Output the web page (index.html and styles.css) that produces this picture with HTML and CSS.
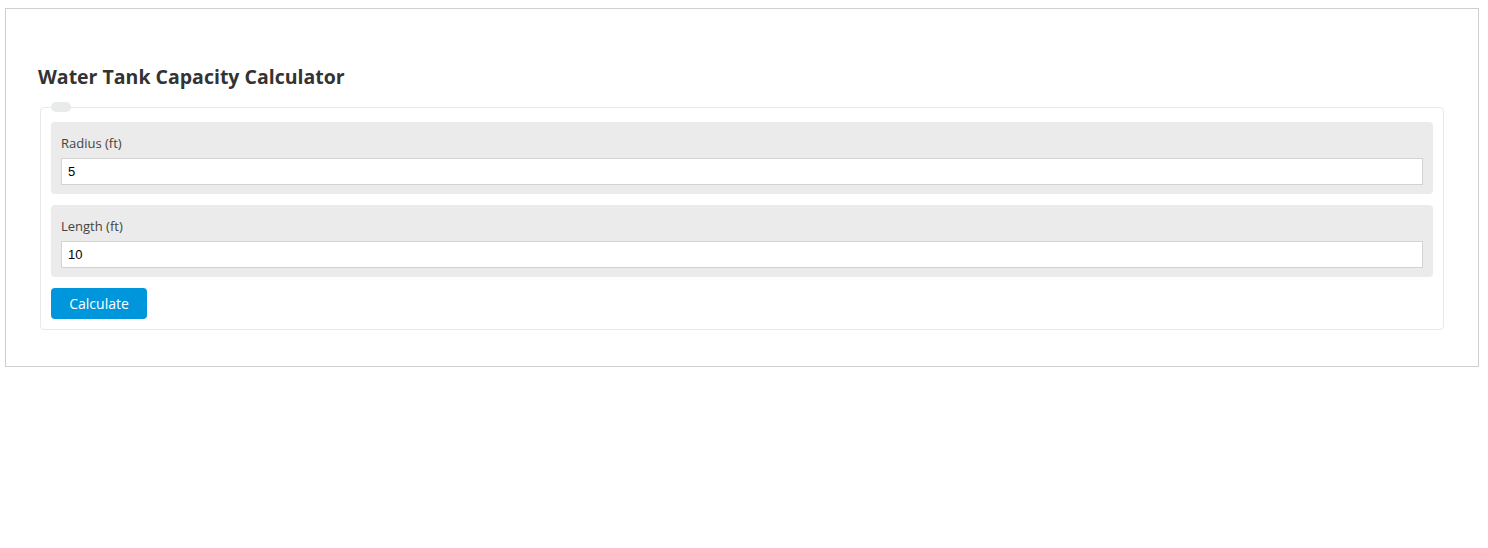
FILE: index.html
```html
<!DOCTYPE html>
<html lang="en">
<head>
    <meta charset="UTF-8">
    <meta name="viewport" content="width=device-width, initial-scale=1.0">
    <title>Water Tank Capacity Calculator</title>
    <link rel="stylesheet" href="styles.css">
</head>
<body>
    <div class="wrapper">
        <h2 class="title">Water Tank Capacity Calculator</h2>

        <fieldset class="calc">
            <legend></legend>

            <div class="field">
                <label for="radius">Radius (ft)</label>
                <input type="text" id="radius" value="5">
            </div>

            <div class="field">
                <label for="length">Length (ft)</label>
                <input type="text" id="length" value="10">
            </div>

            <button class="calc-btn" onclick="calculate()">Calculate</button>
        </fieldset>
    </div>

    <script>
        // volume of a cylindrical tank, in gallons
        function calculate() {
            const r = parseFloat(document.getElementById("radius").value);
            const l = parseFloat(document.getElementById("length").value);
            if (isNaN(r) || isNaN(l)) return;
            const gallons = Math.PI * r * r * l * 7.48052;
            console.log(gallons.toFixed(2));
        }
    </script>
</body>
</html>
```

FILE: styles.css
```css
body {
    margin: 0;
    padding: 8px 9px 0 5px;
    font-family: "Open Sans", "Noto Sans", Arial, sans-serif;
    color: #333;
}
.wrapper {
    border: 1px solid #cfcfcf;
    padding: 55px 34px 36px 34px;
}
.title {
    margin: 0 0 12px -2px;
    font-size: 19.5px;
    font-weight: 700;
    color: #333;
    line-height: 26px;
}
.calc {
    margin: 0;
    border: 1px solid #e8e8e8;
    border-radius: 4px;
    padding: 10px 10px 10px 10px;
    min-width: 0;
}
.calc legend {
    width: 20px;
    height: 10px;
    padding: 0;
    background-color: #e9eaea;
    border-radius: 5px;
}
.field {
    background-color: #eaebea;
    border-radius: 4px;
    padding: 12px 10px 9px 10px;
    margin-bottom: 11px;
}
.field label {
    display: block;
    font-size: 13px;
    line-height: 18px;
    color: #444;
    margin-bottom: 6px;
}
.field input {
    display: block;
    width: 100%;
    box-sizing: border-box;
    height: 27px;
    border: 1px solid #d3d3d3;
    padding: 0 6px;
    font-family: Arial, "Liberation Sans", sans-serif;
    font-size: 13px;
    color: #000;
    background: #fff;
}
.calc-btn {
    width: 96px;
    height: 31px;
    border: none;
    border-radius: 4px;
    background-color: #0096dc;
    color: #fff;
    font-family: "Open Sans", "Noto Sans", Arial, sans-serif;
    font-size: 14px;
    cursor: pointer;
}
.calc-btn:hover {
    background-color: #0084c4;
}
```
